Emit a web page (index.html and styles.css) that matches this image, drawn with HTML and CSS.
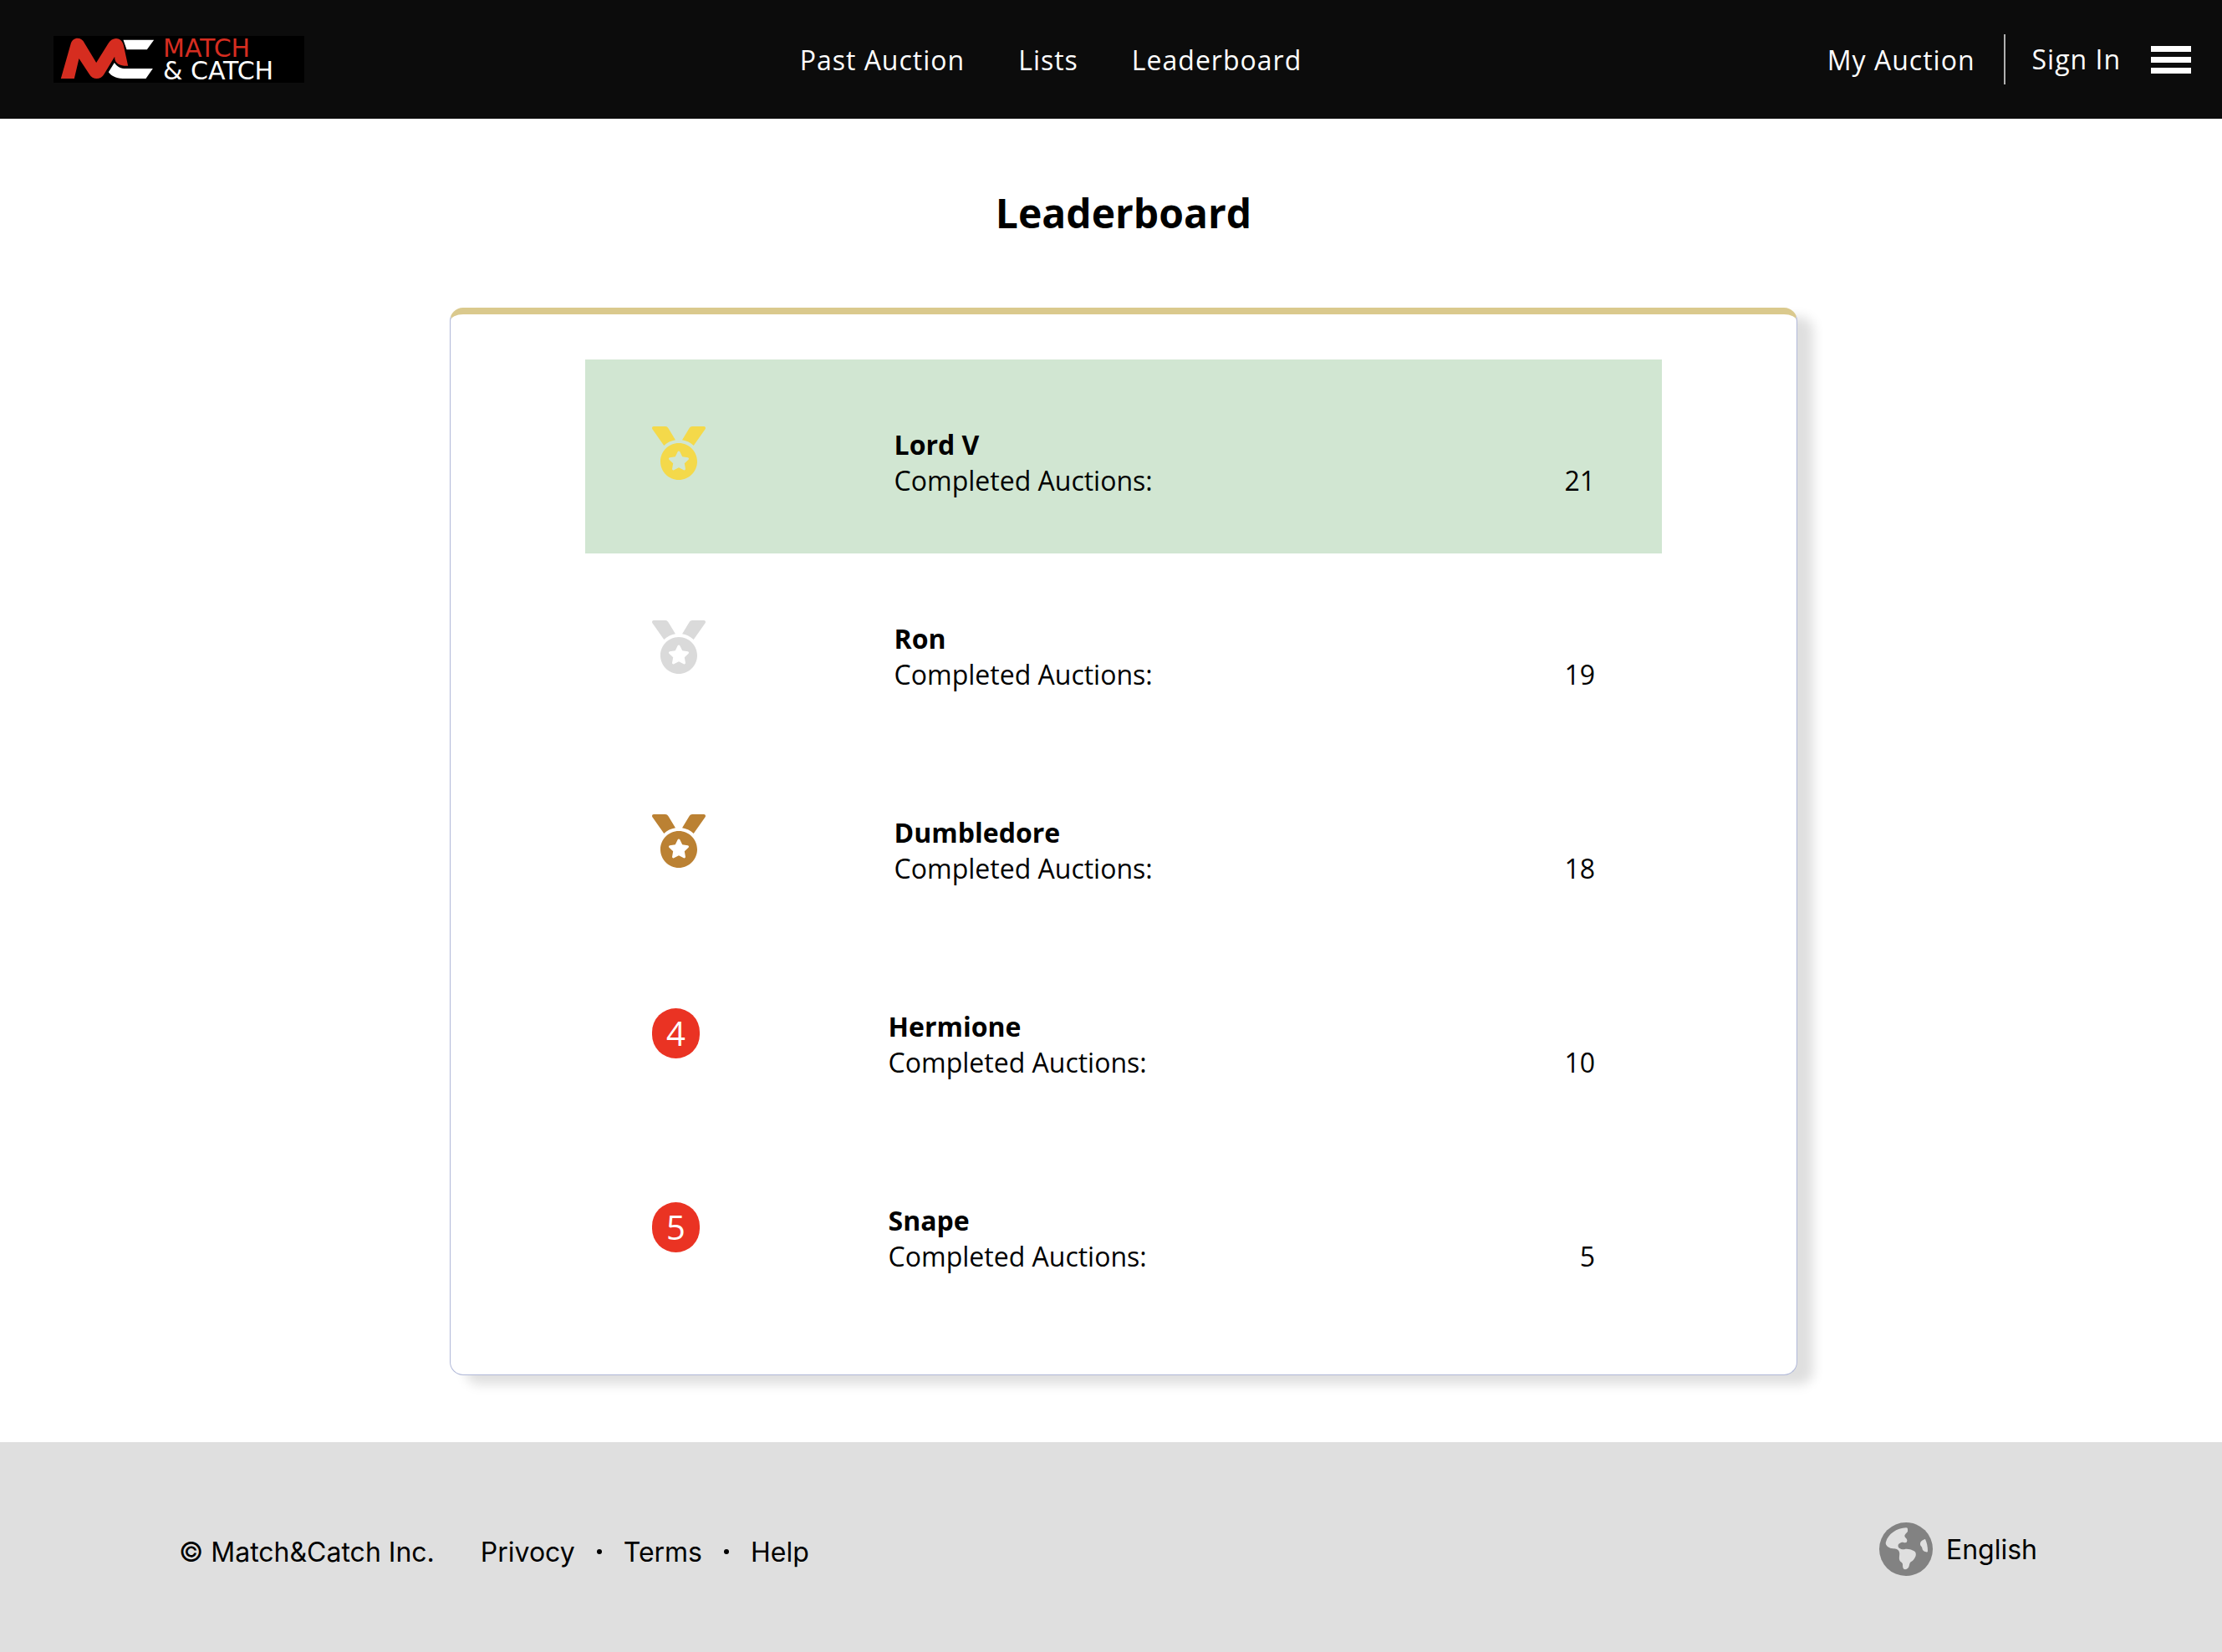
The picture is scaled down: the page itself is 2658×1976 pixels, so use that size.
FILE: index.html
```html
<!DOCTYPE html>
<html lang="en">
<head>
<meta charset="utf-8">
<meta name="viewport" content="width=device-width, initial-scale=1">
<title>Leaderboard - Match &amp; Catch</title>
<link rel="stylesheet" href="styles.css">
</head>
<body>
<svg class="sprite" aria-hidden="true">
  <symbol id="medal" viewBox="0 0 512 512"><path d="M223.75 130.75L154.62 15.54A31.997 31.997 0 0 0 127.18 0H16.03C3.08 0-4.5 14.57 2.92 25.18l111.27 158.96c29.72-27.77 67.52-46.83 109.56-53.39zM495.97 0H384.82c-11.24 0-21.66 5.9-27.44 15.54l-69.13 115.21c42.04 6.56 79.84 25.62 109.56 53.38L509.08 25.18C516.5 14.57 508.92 0 495.97 0zM256 160c-97.2 0-176 78.8-176 176s78.8 176 176 176 176-78.8 176-176-78.8-176-176-176zm92.52 157.26l-37.93 36.96 8.97 52.22c1.6 9.36-8.26 16.51-16.65 12.09L256 393.88l-46.9 24.65c-8.4 4.45-18.25-2.74-16.65-12.09l8.97-52.22-37.93-36.96c-6.82-6.64-3.05-18.23 6.35-19.59l52.43-7.64 23.43-47.52c2.11-4.28 6.19-6.39 10.28-6.39 4.11 0 8.22 2.14 10.33 6.39l23.43 47.52 52.43 7.64c9.4 1.36 13.17 12.95 6.35 19.59z"/></symbol>
</svg>

<header class="header">
  <a class="logo" href="#">
    <svg class="logo-mark" viewBox="60 66 350 168" aria-hidden="true">
      <path fill="#fff" d="M292 80H402L377 115H304ZM260 162C270 178 284 183 300 183H398L373 219H290C264 219 248 208 239 196Z"/>
      <path fill="#d62d20" d="M68 219L103 96C110 68 142 68 153 92L195 162L238 93C252 68 286 68 293 100L309 173C284 174 260 168 261 140L223 203C212 224 181 224 170 203L133 147L116 219Z"/>
    </svg>
    <span class="logo-text"><span class="logo-red">MATCH</span><span>&amp; CATCH</span></span>
  </a>
  <nav class="nav" aria-label="Main">
    <a href="#">Past Auction</a>
    <a href="#">Lists</a>
    <a href="#">Leaderboard</a>
  </nav>
  <div class="account">
    <a class="my-auction" href="#">My Auction</a>
    <a class="sign-in" href="#">Sign In</a>
    <button class="menu" type="button" aria-label="Menu"><span></span><span></span><span></span></button>
  </div>
</header>

<main class="main">
  <h1 class="title">Leaderboard</h1>
  <ol class="board">
    <li class="row first">
      <svg class="medal gold" aria-hidden="true"><use href="#medal"/></svg>
      <div class="info"><h2 class="name">Lord V</h2><p class="stat"><span>Completed Auctions:</span><span>21</span></p></div>
    </li>
    <li class="row">
      <svg class="medal silver" aria-hidden="true"><use href="#medal"/></svg>
      <div class="info"><h2 class="name">Ron</h2><p class="stat"><span>Completed Auctions:</span><span>19</span></p></div>
    </li>
    <li class="row">
      <svg class="medal bronze" aria-hidden="true"><use href="#medal"/></svg>
      <div class="info"><h2 class="name">Dumbledore</h2><p class="stat"><span>Completed Auctions:</span><span>18</span></p></div>
    </li>
    <li class="row">
      <span class="rank">4</span>
      <div class="info"><h2 class="name">Hermione</h2><p class="stat"><span>Completed Auctions:</span><span>10</span></p></div>
    </li>
    <li class="row">
      <span class="rank">5</span>
      <div class="info"><h2 class="name">Snape</h2><p class="stat"><span>Completed Auctions:</span><span>5</span></p></div>
    </li>
  </ol>
</main>

<footer class="footer">
  <div class="legal">
    <span class="copyright">© Match&amp;Catch Inc.</span>
    <a href="#">Privocy</a>
    <span class="dot"></span>
    <a href="#">Terms</a>
    <span class="dot"></span>
    <a href="#">Help</a>
  </div>
  <button class="language" type="button">
    <svg class="globe" viewBox="84 62 192 192" aria-hidden="true">
      <circle cx="180" cy="158" r="96" fill="#828282"/>
      <path fill="#dfdfdf" d="M181 81Q187 81 186 88V94C184 100 174 104 175 111C176 118 185 120 184 128Q184 135 177 135C170 135 170 131 163 134C156 137 150 140 152 148C154 156 164 159 174 159C184 155 199 160 206 163C216 166 217 177 214 184C210 193 206 199 198 203C191 208 193 218 188 225Q183 231 177 231C169 230 168 222 168 212C167 204 157 204 156 194C154 184 160 174 154 164C148 153 134 158 124 154C115 151 104 142 108 132C116 104 146 82 181 81Z"/>
      <path fill="#dfdfdf" d="M249 122C255 134 258 149 258 165Q258 170 252 168C243 165 239 162 238 154C237 148 230 147 231 138C232 129 241 124 249 122Z"/>
    </svg>
    <span>English</span>
  </button>
</footer>
</body>
</html>
```

FILE: styles.css
```css
* {
  box-sizing: border-box;
}

body {
  margin: 0;
  min-height: 100vh;
  display: flex;
  flex-direction: column;
  background: #fff;
  color: #000;
  font: 32px/43px "Open Sans", "Noto Sans", sans-serif;
}

a {
  color: inherit;
  text-decoration: none;
}

button {
  padding: 0;
  border: 0;
  background: none;
  color: inherit;
  font: inherit;
  cursor: pointer;
}

h1, h2, p, ol {
  margin: 0;
  padding: 0;
}

.sprite {
  display: none;
}

/* Header */
.header {
  display: flex;
  align-items: center;
  justify-content: space-between;
  height: 142px;
  padding: 0 37px 0 64px;
  background: #0c0c0c;
  color: #fff;
  font-weight: 500;
  letter-spacing: 1px;
}

.logo {
  display: flex;
  align-items: center;
  gap: 8px;
  width: 300px;
  height: 56px;
  padding-left: 6px;
  background: #000;
}

.logo-mark {
  width: 117px;
  height: 56px;
}

.logo-text {
  display: flex;
  flex-direction: column;
  font: 30px/27px "DejaVu Sans", sans-serif;
  letter-spacing: normal;
  white-space: nowrap;
}

.logo-red {
  color: #d62d20;
}

.nav {
  display: flex;
  gap: 64px;
  margin-right: 36px;
}

.account {
  display: flex;
  align-items: center;
}

.my-auction {
  padding-right: 34px;
}

.sign-in {
  padding: 8px 36px 9px 32px;
  border-left: 2px solid #b0b0b0;
}

.menu {
  display: flex;
  flex-direction: column;
  gap: 6px;
  width: 48px;
}

.menu span {
  height: 7px;
  background: #fff;
}

/* Leaderboard */
.main {
  flex: 1;
  display: flex;
  flex-direction: column;
  align-items: center;
  padding: 80px 0 80px 30px;
}

.title {
  margin-bottom: 80px;
  font-size: 48px;
  line-height: 66px;
}

.board {
  width: 92%;
  max-width: 1612px;
  padding: 54px 0;
  list-style: none;
  border: 1px solid #b0b8d8;
  border-top: 8px solid #dac98d;
  border-radius: 16px;
  background: #fff;
  box-shadow: 19px 11px 14px #dfdfdf;
}

.row {
  display: flex;
  align-items: flex-start;
  gap: 20%;
  width: 80%;
  height: 232px;
  margin: 0 auto;
  padding: 80px 80px 0;
}

.first {
  background: #d1e6d2;
}

.medal {
  flex: none;
  width: 64px;
  height: 64px;
  fill: currentColor;
}

.gold {
  color: #f4d94a;
}

.silver {
  color: #dadada;
}

.bronze {
  color: #bb8133;
}

.rank {
  flex: none;
  width: 57px;
  border-radius: 30px;
  background: #ea3323;
  color: #fff;
  font-size: 40px;
  line-height: 60px;
  text-align: center;
}

.info {
  flex: 1;
}

.name {
  font-size: 32px;
}

.stat {
  display: flex;
  justify-content: space-between;
}

/* Footer */
.footer {
  display: flex;
  align-items: center;
  justify-content: space-between;
  padding: 96px 221px 91px 214px;
  background: #dfdfdf;
  font-family: Inter, "Liberation Sans", sans-serif;
}

.legal {
  display: flex;
  align-items: center;
  padding-top: 6px;
}

.copyright {
  margin-right: 55px;
}

.dot {
  width: 6px;
  height: 6px;
  margin: 0 26px;
  border-radius: 3px;
  background: #000;
}

.language {
  display: flex;
  align-items: center;
  gap: 16px;
}

.globe {
  width: 64px;
  height: 64px;
}
```
